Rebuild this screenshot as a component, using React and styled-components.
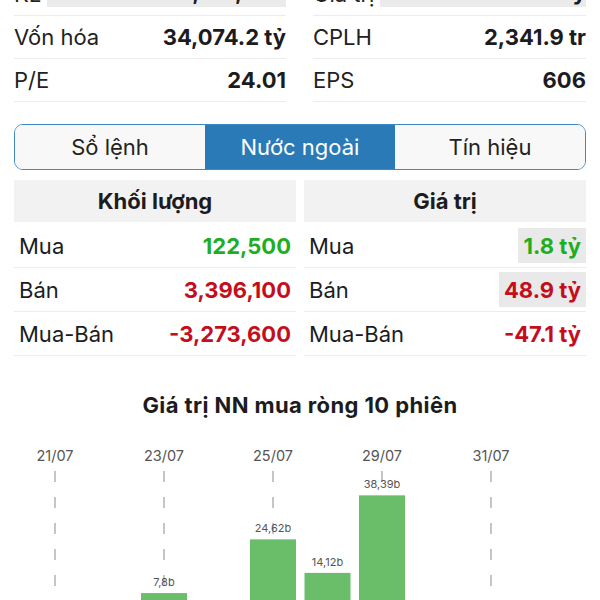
import React from "react";
import styled, { createGlobalStyle } from "styled-components";

const Global = createGlobalStyle`
  html, body { margin: 0; padding: 0; background: #fff; overflow: hidden; }
  body { font-family: Inter, "Noto Sans", sans-serif; color: #1c1c1e; }
`;

const Page = styled.div`
  width: 600px;
  height: 600px;
  overflow: hidden;
  box-sizing: border-box;
  padding: 0 14px;
`;

const InfoGrid = styled.div`
  display: grid;
  grid-template-columns: 272px 273px;
  column-gap: 27px;
  margin-top: -27px;
`;

const InfoRow = styled.div`
  height: 42px;
  display: flex;
  align-items: center;
  border-bottom: 1px solid #ececec;
  font-size: 22px;
`;

const InfoLabel = styled.span`
  color: #222;
  white-space: nowrap;
`;

const InfoValue = styled.span`
  flex: 1;
  align-self: stretch;
  display: flex;
  align-items: center;
  justify-content: flex-end;
  font-weight: 700;
  white-space: nowrap;
  margin: ${(p) => (p.$flash ? "4px 0 8px 6px" : "0")};
  background: ${(p) => (p.$flash ? "#ebebeb" : "transparent")};
`;

const Tabs = styled.div`
  margin-top: 22px;
  height: 46px;
  box-sizing: border-box;
  display: grid;
  grid-template-columns: 1fr 1fr 1fr;
  border: 1.5px solid #3f88c3;
  border-radius: 9px;
  overflow: hidden;
`;

const Tab = styled.div`
  display: flex;
  align-items: center;
  justify-content: center;
  font-size: 22px;
  background: ${(p) => (p.$active ? "#2a7ab8" : "#f8f8f8")};
  color: ${(p) => (p.$active ? "#fff" : "#222")};
`;

const DataGrid = styled.div`
  margin-top: 10px;
  display: grid;
  grid-template-columns: 1fr 1fr;
  column-gap: 8px;
`;

const DataCol = styled.div`
  display: flex;
  flex-direction: column;
`;

const DataHeader = styled.div`
  height: 42px;
  margin-bottom: 2px;
  background: #f2f2f2;
  display: flex;
  align-items: center;
  justify-content: center;
  font-size: 22px;
  font-weight: 700;
`;

const DataRow = styled.div`
  height: 43px;
  display: flex;
  align-items: center;
  border-bottom: 1px solid #ececec;
  padding-left: 5px;
  font-size: 22px;
`;

const DataValue = styled.span`
  margin-left: auto;
  align-self: stretch;
  margin-top: 4px;
  margin-bottom: 4px;
  padding: 0 5px;
  display: flex;
  align-items: center;
  font-weight: 700;
  white-space: nowrap;
  color: ${(p) => p.$color};
  background: ${(p) => (p.$flash ? "#e9e9e9" : "transparent")};
`;

const ChartTitle = styled.div`
  margin-top: 37px;
  text-align: center;
  font-size: 22px;
  letter-spacing: 0.4px;
  line-height: 24px;
  font-weight: 700;
`;

const ChartBox = styled.div`
  margin: 22px -14px 0;
  width: 600px;
  height: 180px;
`;

const GREEN = "#1fae1f";
const RED = "#c40e1c";

const info = [
  [
    ["KL", "12,133,200", true],
    ["Vốn hóa", "34,074.2 tỷ"],
    ["P/E", "24.01"],
  ],
  [
    ["Giá trị", "176.2 tỷ", true],
    ["CPLH", "2,341.9 tr"],
    ["EPS", "606"],
  ],
];

const tables = [
  {
    title: "Khối lượng",
    rows: [
      ["Mua", "122,500", GREEN],
      ["Bán", "3,396,100", RED],
      ["Mua-Bán", "-3,273,600", RED],
    ],
  },
  {
    title: "Giá trị",
    rows: [
      ["Mua", "1.8 tỷ", GREEN, true],
      ["Bán", "48.9 tỷ", RED, true],
      ["Mua-Bán", "-47.1 tỷ", RED],
    ],
  },
];

const sessions = [
  { d: "21/07", v: -12.4 },
  { d: "22/07", v: -8.1 },
  { d: "23/07", v: 7.8 },
  { d: "24/07", v: -5.3 },
  { d: "25/07", v: 24.62 },
  { d: "28/07", v: 14.12 },
  { d: "29/07", v: 38.39 },
  { d: "30/07", v: -20.5 },
  { d: "31/07", v: -15.2 },
  { d: "01/08", v: -47.1 },
];

function Chart() {
  const base = 179;
  const k = 3.195;
  const cx = (i) => 55 + 54.5 * i;
  return (
    <svg width="600" height="180" viewBox="0 0 600 180">
      {sessions.map((s, i) =>
        i % 2 === 0 ? (
          <g key={"l" + i}>
            <text
              x={cx(i)}
              y="22"
              fontSize="14.5"
              fill="#555"
              textAnchor="middle"
              fontFamily="Inter, sans-serif"
            >
              {s.d}
            </text>
            <line
              x1={cx(i)}
              x2={cx(i)}
              y1="32"
              y2="180"
              stroke="#b3b3b3"
              strokeWidth="1.5"
              strokeDasharray="11 15"
            />
          </g>
        ) : null
      )}
      {sessions.map((s, i) =>
        s.v > 0 ? (
          <rect
            key={"b" + i}
            x={cx(i) - 23}
            y={base - s.v * k}
            width="46"
            height={s.v * k}
            fill="#6abe6a"
          />
        ) : null
      )}
      {sessions.map((s, i) =>
        s.v > 0 ? (
          <text
            key={"t" + i}
            x={cx(i)}
            y={base - s.v * k - 7}
            fontSize="11"
            fill="#555"
            textAnchor="middle"
            fontFamily="Inter, sans-serif"
          >
            {String(s.v).replace(".", ",")}b
          </text>
        ) : null
      )}
    </svg>
  );
}

export default function App() {
  return (
    <Page>
      <Global />
      <InfoGrid>
        {info.map((col, ci) => (
          <div key={ci}>
            {col.map(([l, v, f]) => (
              <InfoRow key={l}>
                <InfoLabel>{l}</InfoLabel>
                <InfoValue $flash={f}>{v}</InfoValue>
              </InfoRow>
            ))}
          </div>
        ))}
      </InfoGrid>
      <Tabs>
        <Tab>Sổ lệnh</Tab>
        <Tab $active>Nước ngoài</Tab>
        <Tab>Tín hiệu</Tab>
      </Tabs>
      <DataGrid>
        {tables.map((t) => (
          <DataCol key={t.title}>
            <DataHeader>{t.title}</DataHeader>
            {t.rows.map(([l, v, c, f]) => (
              <DataRow key={l}>
                <span>{l}</span>
                <DataValue $color={c} $flash={f}>
                  {v}
                </DataValue>
              </DataRow>
            ))}
          </DataCol>
        ))}
      </DataGrid>
      <ChartTitle>Giá trị NN mua ròng 10 phiên</ChartTitle>
      <ChartBox>
        <Chart />
      </ChartBox>
    </Page>
  );
}
